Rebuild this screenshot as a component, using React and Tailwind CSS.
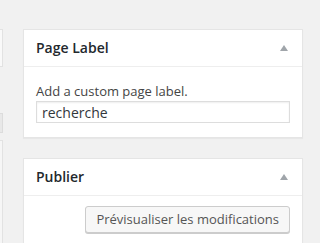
import React from "react";

function Arrow() {
  return (
    <svg width="8" height="6" viewBox="0 0 8 6" className="block">
      <polygon points="4,0 8,6 0,6" fill="#a0a5aa" />
    </svg>
  );
}

function Header({ title }) {
  return (
    <div className="flex items-center justify-between border-b border-[#eeeeee] pl-3 pr-[14px] py-2">
      <span className="text-[14px] leading-[20px] font-semibold text-[#23282d]">{title}</span>
      <Arrow />
    </div>
  );
}

export default function App() {
  return (
    <div className="w-[320px] h-[243px] bg-[#f1f1f1] overflow-hidden flex items-start pt-[29px] font-['Open_Sans',sans-serif]">
      <div className="w-[3px] h-[214px] flex flex-col shrink-0">
        <div className="h-[38px] bg-[#f9f9f9] border border-l-0 border-[#e2e2e2]" />
        <div className="h-[20px] mt-[46px] bg-[#e8e8e8] border border-l-0 border-[#dcdcdc]" />
        <div className="flex-1 mt-[7px] bg-[#f6f6f6] border border-l-0 border-b-0 border-[#e2e2e2]" />
      </div>
      <div className="ml-[20px] w-[280px] flex flex-col gap-[20px]">
        <div className="bg-white border border-[#e5e5e5] shadow-[0_1px_1px_rgba(0,0,0,0.04)]">
          <Header title="Page Label" />
          <div className="px-3 pt-[15px] pb-[14px]">
            <div className="text-[13px] leading-[18px] text-[#444444]">Add a custom page label.</div>
            <div className="mt-[1px] h-[22px] border border-[#dddddd] shadow-[inset_0_1px_2px_rgba(0,0,0,0.07)] flex items-center pl-[5px] text-[14px] text-[#32373c]">
              recherche
            </div>
          </div>
        </div>
        <div className="bg-white border border-[#e5e5e5] shadow-[0_1px_1px_rgba(0,0,0,0.04)] h-[100px]">
          <Header title="Publier" />
          <div className="px-3 pt-[10px] flex justify-end">
            <div className="h-[27px] px-[10px] border border-[#cccccc] rounded-[3px] bg-[#f7f7f7] shadow-[0_1px_0_#cccccc] text-[13px] leading-[25px] text-[#555555] whitespace-nowrap">
              Prévisualiser les modifications
            </div>
          </div>
        </div>
      </div>
    </div>
  );
}
